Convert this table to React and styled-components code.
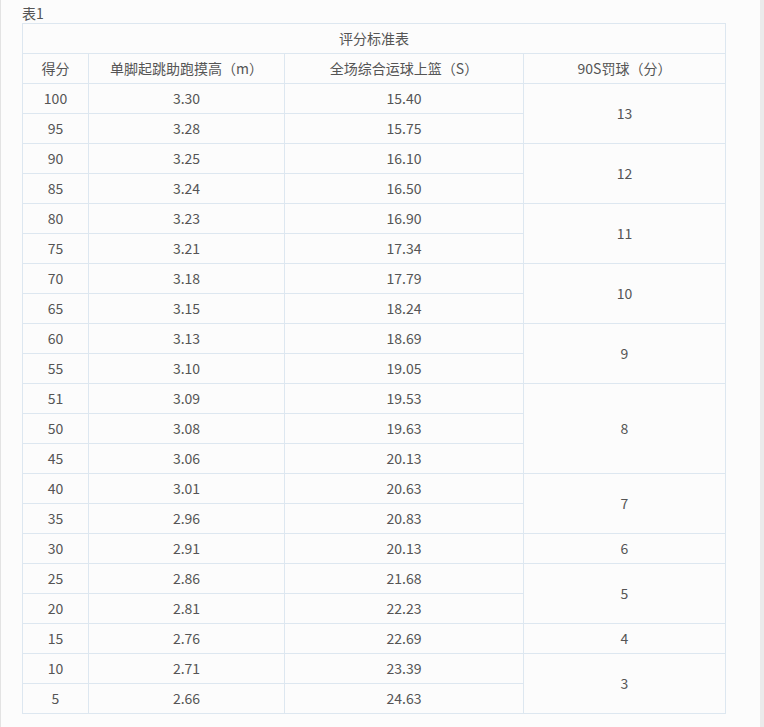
import React from "react";
import styled, { createGlobalStyle } from "styled-components";

const Global = createGlobalStyle`
  html, body { margin: 0; padding: 0; background: #fcfcfc; }
  body { font-family: "Noto Sans CJK SC", "Noto Sans", sans-serif; }
`;

const Page = styled.div`
  width: 764px;
  height: 727px;
  box-sizing: border-box;
  border-left: 1px solid #e3e3e3;
  border-right: 4px solid #ebebeb;
  background: #fcfcfc;
  padding: 3px 0 0 21px;
  color: #555;
`;

const Caption = styled.div`
  font-size: 14px;
  line-height: 20px;
  height: 20px;
  color: #555;
`;

const Table = styled.table`
  border-collapse: collapse;
  table-layout: fixed;
  width: 703px;
  font-size: 14px;
  color: #555;
`;

const Cell = styled.td`
  border: 1px solid #dde7f0;
  height: 27px;
  padding: 0 0 2px 0;
  text-align: center;
  vertical-align: middle;
  line-height: 18px;
`;

const groups = [
  { score: 13, rows: [["100", "3.30", "15.40"], ["95", "3.28", "15.75"]] },
  { score: 12, rows: [["90", "3.25", "16.10"], ["85", "3.24", "16.50"]] },
  { score: 11, rows: [["80", "3.23", "16.90"], ["75", "3.21", "17.34"]] },
  { score: 10, rows: [["70", "3.18", "17.79"], ["65", "3.15", "18.24"]] },
  { score: 9, rows: [["60", "3.13", "18.69"], ["55", "3.10", "19.05"]] },
  { score: 8, rows: [["51", "3.09", "19.53"], ["50", "3.08", "19.63"], ["45", "3.06", "20.13"]] },
  { score: 7, rows: [["40", "3.01", "20.63"], ["35", "2.96", "20.83"]] },
  { score: 6, rows: [["30", "2.91", "20.13"]] },
  { score: 5, rows: [["25", "2.86", "21.68"], ["20", "2.81", "22.23"]] },
  { score: 4, rows: [["15", "2.76", "22.69"]] },
  { score: 3, rows: [["10", "2.71", "23.39"], ["5", "2.66", "24.63"]] },
];

export default function App() {
  return (
    <>
      <Global />
      <Page>
        <Caption>表1</Caption>
        <Table>
          <colgroup>
            <col style={{ width: 66 }} />
            <col style={{ width: 196 }} />
            <col style={{ width: 239 }} />
            <col style={{ width: 202 }} />
          </colgroup>
          <tbody>
            <tr>
              <Cell colSpan={4}>评分标准表</Cell>
            </tr>
            <tr>
              <Cell>得分</Cell>
              <Cell>单脚起跳助跑摸高（m）</Cell>
              <Cell>全场综合运球上篮（S）</Cell>
              <Cell>90S罚球（分）</Cell>
            </tr>
            {groups.map((g) =>
              g.rows.map((r, i) => (
                <tr key={r[0]}>
                  <Cell>{r[0]}</Cell>
                  <Cell>{r[1]}</Cell>
                  <Cell>{r[2]}</Cell>
                  {i === 0 && <Cell rowSpan={g.rows.length}>{g.score}</Cell>}
                </tr>
              ))
            )}
          </tbody>
        </Table>
      </Page>
    </>
  );
}
